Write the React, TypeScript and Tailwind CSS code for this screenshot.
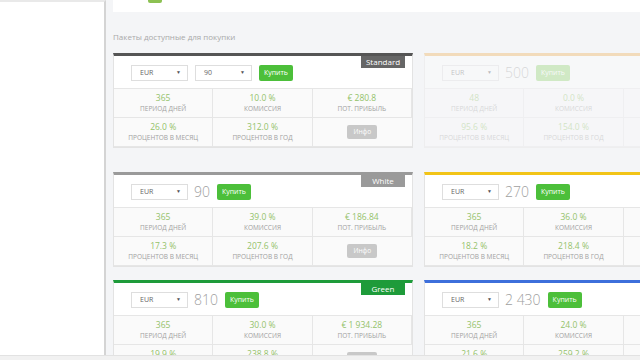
import React from "react";

type Stat = { v: string; l: string };
type Card = {
  name?: string;
  top: string;
  badge?: string;
  price?: string;
  twoSelects?: boolean;
  faded?: boolean;
  stats: Stat[];
  info?: boolean;
};

const cards: Card[] = [
  {
    name: "Standard",
    top: "border-t-[#555555]",
    badge: "bg-[#666666]",
    twoSelects: true,
    info: true,
    stats: [
      { v: "365", l: "период дней" },
      { v: "10.0 %", l: "комиссия" },
      { v: "€ 280.8", l: "пот. прибыль" },
      { v: "26.0 %", l: "процентов в месяц" },
      { v: "312.0 %", l: "процентов в год" },
    ],
  },
  {
    top: "border-t-[#f0ad4e]",
    price: "500",
    faded: true,
    stats: [
      { v: "48", l: "период дней" },
      { v: "0.0 %", l: "комиссия" },
      { v: "€ 0", l: "пот. прибыль" },
      { v: "95.6 %", l: "процентов в месяц" },
      { v: "154.0 %", l: "процентов в год" },
    ],
  },
  {
    name: "White",
    top: "border-t-[#9a9a9a]",
    badge: "bg-[#9a9a9a]",
    price: "90",
    info: true,
    stats: [
      { v: "365", l: "период дней" },
      { v: "39.0 %", l: "комиссия" },
      { v: "€ 186.84", l: "пот. прибыль" },
      { v: "17.3 %", l: "процентов в месяц" },
      { v: "207.6 %", l: "процентов в год" },
    ],
  },
  {
    top: "border-t-[#f2c417]",
    price: "270",
    stats: [
      { v: "365", l: "период дней" },
      { v: "36.0 %", l: "комиссия" },
      { v: "€ 583.2", l: "пот. прибыль" },
      { v: "18.2 %", l: "процентов в месяц" },
      { v: "218.4 %", l: "процентов в год" },
    ],
  },
  {
    name: "Green",
    top: "border-t-[#1e9b3a]",
    badge: "bg-[#1e9b3a]",
    price: "810",
    info: true,
    stats: [
      { v: "365", l: "период дней" },
      { v: "30.0 %", l: "комиссия" },
      { v: "€ 1 934.28", l: "пот. прибыль" },
      { v: "19.9 %", l: "процентов в месяц" },
      { v: "238.8 %", l: "процентов в год" },
    ],
  },
  {
    top: "border-t-[#3d6fdb]",
    price: "2 430",
    stats: [
      { v: "365", l: "период дней" },
      { v: "24.0 %", l: "комиссия" },
      { v: "€ 5 832", l: "пот. прибыль" },
      { v: "21.6 %", l: "процентов в месяц" },
      { v: "259.2 %", l: "процентов в год" },
    ],
  },
];

function Select({ value }: { value: string }) {
  return (
    <div className="flex h-[16px] w-[57px] items-center justify-between border border-[#dedede] bg-white pl-[8px] pr-[6px] text-[7px] text-[#666]">
      <span>{value}</span>
      <span className="text-[5px] text-[#555]">▼</span>
    </div>
  );
}

function Cell({ s }: { s: Stat }) {
  return (
    <div className="flex h-[29px] flex-col items-center border-r border-b border-[#e6e6e6] bg-[#fafafa] pt-[5px] leading-none">
      <span className="text-[8.5px] text-[#94c26a]">{s.v}</span>
      <span className="mt-[3px] text-[6.5px] uppercase text-[#a0a0a0]">{s.l}</span>
    </div>
  );
}

function PackageCard({ c }: { c: Card }) {
  return (
    <div className={`${c.faded ? "opacity-35" : ""}`}>
      <div className={`w-[300px] border border-[#e3e3e3] border-t-[3px] ${c.top} bg-white`}>
        <div className="relative flex h-[32px] items-start gap-[6px] pl-[17px] pt-[9px]">
          <Select value="EUR" />
          {c.twoSelects ? (
            <div className="ml-[1px]">
              <Select value="90" />
            </div>
          ) : (
            <span className="mt-[-2px] text-[14px] font-light leading-[20px] text-[#a0a0a0]">{c.price}</span>
          )}
          <div
            className={`ml-[1px] flex h-[16px] items-center px-[5px] text-[7px] text-white ${
              c.faded ? "bg-[#8ed56a]" : "bg-[#4cbf3a]"
            } rounded-[2px]`}
          >
            Купить
          </div>
          {c.name && (
            <div
              className={`absolute right-[7px] top-0 flex h-[12px] w-[44px] items-center justify-center text-[8px] text-white ${c.badge}`}
            >
              {c.name}
            </div>
          )}
        </div>
        <div className="grid grid-cols-3 border-t border-[#e6e6e6]">
          {c.stats.map((s, i) => (
            <Cell key={i} s={s} />
          ))}
          <div className="flex h-[29px] items-center justify-center border-b border-[#e6e6e6] bg-[#fafafa]">
            {c.info && (
              <div className="flex h-[14px] w-[30px] items-center justify-center rounded-[2px] bg-[#c8c8c8] text-[6.5px] text-white">
                Инфо
              </div>
            )}
          </div>
        </div>
      </div>
    </div>
  );
}

export default function App() {
  const rows = [cards.slice(0, 2), cards.slice(2, 4), cards.slice(4, 6)];
  const rowMb = ["mb-[24px]", "mb-[13px]", "mb-0"];
  return (
    <div className="relative flex h-[360px] w-[640px] overflow-hidden bg-[#f4f5f7] font-['Open_Sans',sans-serif]">
      <aside className="h-full w-[106px] shrink-0 border-r-2 border-t-2 border-r-[#d4d4d4] border-t-[#e9e9e9] bg-white" />
      <main className="min-w-0 flex-1 overflow-hidden pl-[7px]">
        <div className="relative h-[12px] w-[600px] bg-white">
          <div className="absolute left-[35px] top-0 h-[3px] w-[14px] rounded-b-[2px] bg-[#8cc152]" />
        </div>
        <h2 className="mt-[18px] mb-[9px] text-[8px] leading-[14px] text-[#a9a9a9]">Пакеты доступные для покупки</h2>
        {rows.map((r, i) => (
          <div key={i} className={`flex gap-[11px] ${rowMb[i]}`}>
            {r.map((c, j) => (
              <PackageCard key={j} c={c} />
            ))}
          </div>
        ))}
      </main>
      <div className="absolute bottom-0 left-0 right-0 h-[5px] border-t border-[#e2e2e2] bg-[#f1f1f1]" />
    </div>
  );
}
